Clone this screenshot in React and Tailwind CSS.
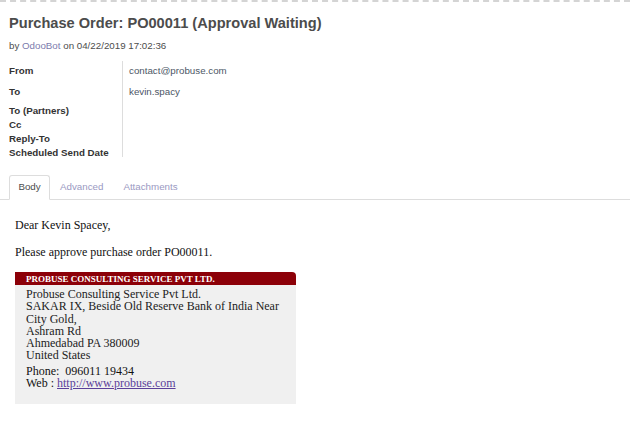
const fields = [
  { label: "From", value: "contact@probuse.com", cls: "h-[21px]" },
  { label: "To", value: "kevin.spacy", cls: "h-[19px]" },
  { label: "To (Partners)", value: "", cls: "h-[14px]" },
  { label: "Cc", value: "", cls: "h-[14px]" },
  { label: "Reply-To", value: "", cls: "h-[14px]" },
  { label: "Scheduled Send Date", value: "", cls: "h-[14px]" },
];

const App = () => {
  return (
    <div className="w-[630px] h-[435px] bg-white overflow-hidden font-['Liberation_Sans',Arial,sans-serif]">
      <div className="border-t-2 border-dashed border-[#d4d4d4]" />

      {/* Header */}
      <div className="px-[9px] pt-[11px]">
        <h1 className="text-[14.6px] font-bold text-[#4c4c4c] leading-[20px]">
          Purchase Order: PO00011 (Approval Waiting)
        </h1>
        <p className="text-[9.75px] text-[#4c4c4c] mt-[7px] leading-[12px]">
          by <span className="text-[#7c7bad]">OdooBot</span> on 04/22/2019 17:02:36
        </p>
      </div>

      {/* Fields */}
      <div className="flex px-[9px] mt-[9px]">
        <div className="w-[113px] pt-[4px]">
          {fields.map((f) => (
            <div key={f.label} className={`${f.cls} text-[9.75px] font-bold text-[#333] leading-[12px]`}>
              {f.label}
            </div>
          ))}
        </div>
        <div className="border-l border-[#ddd] pl-[6px] pt-[4px] h-[96px]">
          {fields.map((f) => (
            <div key={f.label} className={`${f.cls} text-[9.75px] text-[#4c5766] leading-[12px]`}>
              {f.value}
            </div>
          ))}
        </div>
      </div>

      {/* Tabs */}
      <div className="flex items-end mt-[14px] pl-[9px] border-b border-[#ddd] h-[25px]">
        <div className="w-[41px] h-[25px] -mb-px border border-b-white border-[#ddd] rounded-t-[3px] bg-white flex items-center justify-center text-[9.75px] text-[#4c4c4c]">
          Body
        </div>
        <div className="h-[24px] flex items-center pl-[10px] text-[9.75px] text-[#9a99c2]">Advanced</div>
        <div className="h-[24px] flex items-center pl-[20px] text-[9.75px] text-[#9a99c2]">Attachments</div>
      </div>

      {/* Body */}
      <div className="px-[15px] pt-[18px] font-['Liberation_Serif','Times_New_Roman',serif] text-[12px] text-[#111]">
        <p className="leading-[14px]">Dear Kevin Spacey,</p>
        <p className="leading-[14px] mt-[13px]">Please approve purchase order PO00011.</p>

        <div className="w-[281px] mt-[13px]">
          <div className="bg-[#8c0008] rounded-tr-[4px] h-[13px] pl-[11px] text-[9px] font-bold text-white leading-[14px]">
            PROBUSE CONSULTING SERVICE PVT LTD.
          </div>
          <div className="bg-[#f0f0f0] h-[119px] pl-[11px] pt-[3px] text-[#222] text-[12px] leading-[12.25px]">
            <div>Probuse Consulting Service Pvt Ltd.</div>
            <div>SAKAR IX, Beside Old Reserve Bank of India Near</div>
            <div>City Gold,</div>
            <div>Ashram Rd</div>
            <div>Ahmedabad PA 380009</div>
            <div>United States</div>
            <div className="mt-[3px] text-[#111]">Phone:&nbsp; 096011 19434</div>
            <div className="text-[#111]">
              Web : <span className="text-[#5b3f9a] underline">http://www.probuse.com</span>
            </div>
          </div>
        </div>
      </div>
    </div>
  );
};

export default App;
